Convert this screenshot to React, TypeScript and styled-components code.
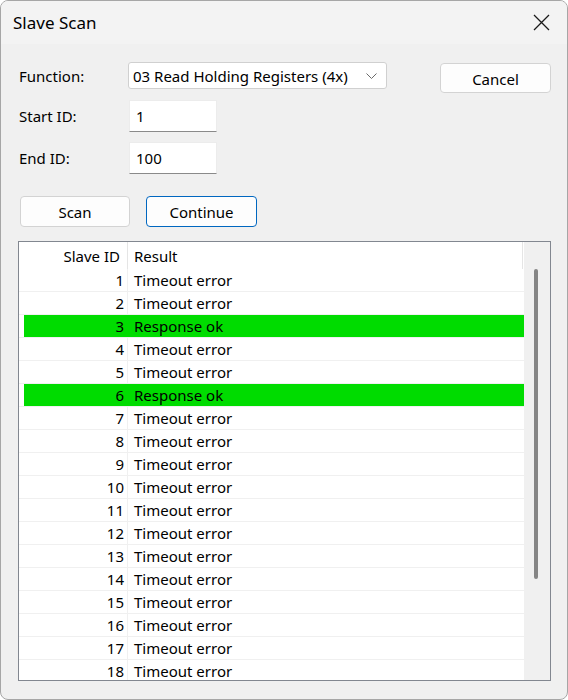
import styled, { createGlobalStyle } from "styled-components";

const GlobalStyle = createGlobalStyle`
  html, body {
    margin: 0;
    padding: 0;
    background: #ffffff;
  }
  * {
    box-sizing: border-box;
  }
`;

const FONT = `"Noto Sans", "Open Sans", Arial, sans-serif`;

const Window = styled.div`
  width: 568px;
  height: 700px;
  border: 1px solid #a6a6a6;
  border-radius: 8px;
  overflow: hidden;
  background: #f0f0f0;
  display: flex;
  flex-direction: column;
  font-family: ${FONT};
  font-size: 15px;
  color: #000;
`;

const TitleBar = styled.div`
  height: 43px;
  flex: none;
  background: #f3f3f3;
  display: flex;
  align-items: center;
  justify-content: space-between;
  padding: 0 16px 0 12px;
`;

const Title = styled.span`
  font-size: 17px;
`;

const CloseButton = styled.button`
  border: none;
  background: transparent;
  padding: 0;
  width: 20px;
  height: 20px;
  display: flex;
  align-items: center;
  justify-content: center;
`;

const Body = styled.div`
  flex: 1;
  display: flex;
  flex-direction: column;
  padding: 18px 16px 18px 17px;
  min-height: 0;
`;

const TopArea = styled.div`
  display: flex;
  justify-content: space-between;
  align-items: flex-start;
`;

const FormGrid = styled.div`
  display: grid;
  grid-template-columns: 110px auto;
  align-items: center;
`;

const Label = styled.label<{ $gap: number }>`
  padding-left: 1px;
  margin-bottom: ${({ $gap }) => $gap}px;
`;

const Combo = styled.div`
  width: 259px;
  height: 27px;
  margin-bottom: 11px;
  background: #ffffff;
  border: 1px solid #d0d0d0;
  border-radius: 3px;
  display: flex;
  align-items: center;
  justify-content: space-between;
  padding: 0 9px 0 4px;
`;

const TextBox = styled.div<{ $gap: number }>`
  width: 88px;
  height: 32px;
  margin-left: 1px;
  margin-bottom: ${({ $gap }) => $gap}px;
  background: #ffffff;
  border: 1px solid #ececec;
  border-bottom: 1px solid #8a8a8a;
  display: flex;
  align-items: center;
  padding: 0 6px;
`;

const Button = styled.button<{ $primary?: boolean; $width: number }>`
  width: ${({ $width }) => $width}px;
  height: 31px;
  font-family: ${FONT};
  font-size: 15px;
  color: #000;
  background: #fdfdfd;
  border: 1px solid ${({ $primary }) => ($primary ? "#0067c0" : "#d3d3d3")};
  border-radius: 4px;
  padding: 0;
`;

const CancelButton = styled(Button)`
  margin-top: 1px;
  height: 30px;
  padding-top: 1px;
`;

const ButtonRow = styled.div`
  display: flex;
  gap: 16px;
  margin-top: 22px;
  padding-left: 2px;
`;

const List = styled.div`
  margin-top: 14px;
  flex: 1;
  min-height: 0;
  border: 1px solid #828790;
  background: #ffffff;
  display: flex;
  overflow: hidden;
`;

const Rows = styled.div`
  flex: 1;
  overflow: hidden;
`;

const HeaderRow = styled.div`
  height: 27px;
  display: grid;
  grid-template-columns: 109px 1fr;
  align-items: stretch;
  border-right: 1px solid #e5e5e5;
  margin-right: 1px;
`;

const HeaderCell = styled.div<{ $right?: boolean }>`
  display: flex;
  align-items: center;
  justify-content: ${({ $right }) => ($right ? "flex-end" : "flex-start")};
  padding: ${({ $right }) => ($right ? "0 7px 0 0" : "0 0 0 6px")};
  border-right: ${({ $right }) => ($right ? "1px solid #e5e5e5" : "none")};
`;

const Row = styled.div<{ $ok?: boolean }>`
  height: 23px;
  display: grid;
  grid-template-columns: 109px 1fr;
  border-bottom: 1px solid #f0f0f0;
  background: ${({ $ok }) =>
    $ok ? "linear-gradient(to right, #fff 5px, #00dc00 5px)" : "#ffffff"};
`;

const Cell = styled.div<{ $right?: boolean; $ok?: boolean }>`
  display: flex;
  align-items: center;
  justify-content: ${({ $right }) => ($right ? "flex-end" : "flex-start")};
  padding: ${({ $right }) => ($right ? "1px 3px 0 0" : "1px 0 0 6px")};
  border-right: ${({ $right, $ok }) =>
    $right ? `1px solid ${$ok ? "#00dc00" : "#f0f0f0"}` : "none"};
  line-height: 1;
`;

const ScrollTrack = styled.div`
  width: 26px;
  flex: none;
  background: #f0f0f0;
  padding: 27px 0 0 10px;
`;

const ScrollThumb = styled.div`
  width: 4px;
  height: 310px;
  border-radius: 2px;
  background: #858585;
`;

const rows = Array.from({ length: 18 }, (_, i) => i + 1);
const okIds = [3, 6];

export default function App() {
  return (
    <>
      <GlobalStyle />
      <Window>
        <TitleBar>
          <Title>Slave Scan</Title>
          <CloseButton>
            <svg width="17" height="17" viewBox="0 0 17 17">
              <path d="M1 1L16 16M16 1L1 16" stroke="#1a1a1a" strokeWidth="1.3" fill="none" />
            </svg>
          </CloseButton>
        </TitleBar>
        <Body>
          <TopArea>
            <FormGrid>
              <Label $gap={11}>Function:</Label>
              <Combo>
                <span>03 Read Holding Registers (4x)</span>
                <svg width="11" height="6" viewBox="0 0 11 6">
                  <path d="M0.5 0.5L5.5 5.5L10.5 0.5" stroke="#6a6a6a" strokeWidth="1" fill="none" />
                </svg>
              </Combo>
              <Label $gap={10}>Start ID:</Label>
              <TextBox $gap={10}>1</TextBox>
              <Label $gap={0}>End ID:</Label>
              <TextBox $gap={0}>100</TextBox>
            </FormGrid>
            <CancelButton $width={111}>Cancel</CancelButton>
          </TopArea>
          <ButtonRow>
            <Button $width={110}>Scan</Button>
            <Button $width={111} $primary>
              Continue
            </Button>
          </ButtonRow>
          <List>
            <Rows>
              <HeaderRow>
                <HeaderCell $right>Slave ID</HeaderCell>
                <HeaderCell>Result</HeaderCell>
              </HeaderRow>
              {rows.map((id) => {
                const ok = okIds.includes(id);
                return (
                  <Row key={id} $ok={ok}>
                    <Cell $right $ok={ok}>
                      {id}
                    </Cell>
                    <Cell>{ok ? "Response ok" : "Timeout error"}</Cell>
                  </Row>
                );
              })}
            </Rows>
            <ScrollTrack>
              <ScrollThumb />
            </ScrollTrack>
          </List>
        </Body>
      </Window>
    </>
  );
}
